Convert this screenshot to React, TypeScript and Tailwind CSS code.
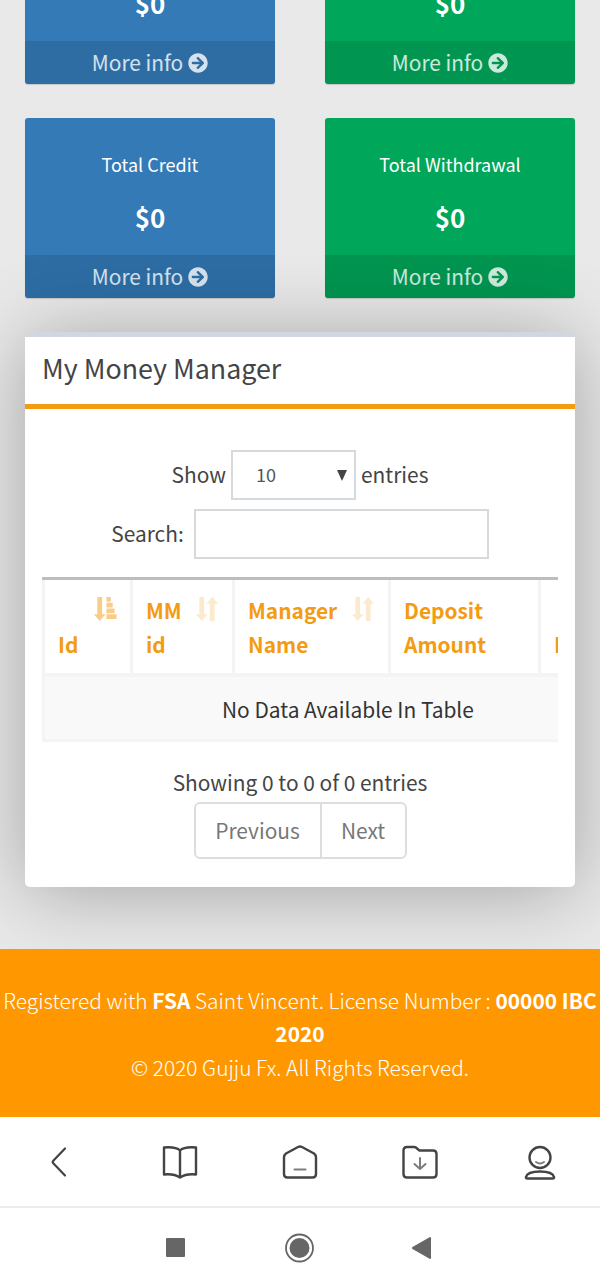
import React from 'react';
import { FaArrowCircleRight } from 'react-icons/fa';

interface StatCardProps {
  title: string;
  value: string;
  color: string;
}

interface Column {
  label: string;
  width: string;
  sort: 'asc' | 'both' | 'none';
}

const stats: StatCardProps[] = [
  { title: 'Total Deposit', value: '$0', color: 'bg-[#337ab7]' },
  { title: 'Total Profit', value: '$0', color: 'bg-[#00a65a]' },
  { title: 'Total Credit', value: '$0', color: 'bg-[#337ab7]' },
  { title: 'Total Withdrawal', value: '$0', color: 'bg-[#00a65a]' },
];

const columns: Column[] = [
  { label: 'Id', width: 'w-[88px]', sort: 'asc' },
  { label: 'MM id', width: 'w-[102px]', sort: 'both' },
  { label: 'Manager Name', width: 'w-[156px]', sort: 'both' },
  { label: 'Deposit Amount', width: 'w-[150px]', sort: 'none' },
  { label: 'Id', width: 'w-[88px]', sort: 'none' },
];

const StatCard: React.FC<StatCardProps> = ({ title, value, color }) => (
  <div className={`flex h-[180px] flex-col rounded-[3px] text-center text-white shadow-[0_1px_1px_rgba(0,0,0,0.15)] ${color}`}>
    <p className="mt-[30px] text-[18px] leading-8">{title}</p>
    <p className="mt-[18px] text-[26px] font-bold leading-[38px]">{value}</p>
    <div className="mt-auto flex h-[43px] items-center justify-center rounded-b-[3px] bg-black/10 text-white/80">
      <span className="mt-px">More info</span>
      <FaArrowCircleRight className="ml-[5px] size-5" />
    </div>
  </div>
);

const SortIcon: React.FC<{ sort: Column['sort'] }> = ({ sort }) => {
  if (sort === 'none') return null;
  return (
    <svg
      className={`absolute right-[13px] top-[17px] h-[25px] w-6 ${sort === 'asc' ? 'opacity-50' : 'opacity-20'}`}
      viewBox="0 0 24 26"
      fill="currentColor"
    >
      <path d="M4 0h5v18h3.500L6.500 25 .5 18H4z" />
      {sort === 'asc' ? (
        <path d="M13.500 0h4.500v5h-4.500zM13.500 6h6.500v5h-6.500zM13.500 12h8.500v5h-8.500zM13.500 18h10.500v5h-10.500z" />
      ) : (
        <path d="M17.500 0l6 7H20v18h-5V7h-3.500z" />
      )}
    </svg>
  );
};

const MoneyManager: React.FC = () => (
  <section className="relative mx-[25px] mt-[34px] h-[555px] rounded-[5px] border-t-[5px] border-[#d2d6de] bg-white shadow-[0_5px_80px_rgba(0,0,0,0.3)]">
    <h3 className="h-[72px] border-b-[5px] border-[#f39c12] pl-[17px] text-[26.800px] leading-[61px]">My Money Manager</h3>
    <div className="mt-[41px] flex items-center justify-center">
      <span>Show</span>
      <div className="mx-[5px] flex h-[50px] w-[125px] items-center justify-between border-2 border-[#d6dadd] pl-[23px] pr-[7px] text-[18px] text-[#555]">
        <span>10</span>
        <svg className="h-[11px] w-[10px]" viewBox="0 0 10 11" fill="#444">
          <path d="M0 0h10L5 11z" />
        </svg>
      </div>
      <span>entries</span>
    </div>
    <label className="mt-[9px] flex items-center justify-center">
      Search:
      <input className="ml-[10px] h-[50px] w-[295px] border-2 border-[#d6dadd]" />
    </label>

    <div className="mx-[17px] mt-[18px] overflow-hidden">
      <div className="w-[587px] border-t-[3px] border-[#bdbdbd]">
        <div className="flex h-[97px] border-b-4 border-r-[3px] border-[#f4f4f4]">
          {columns.map((column, index) => (
            <div
              key={index}
              className={`relative flex shrink-0 items-end border-l-[3px] border-[#f4f4f4] pb-3 pl-[13px] pr-[46px] font-bold text-[#f39c12] ${column.width}`}
            >
              <span className="w-min">{column.label}</span>
              <SortIcon sort={column.sort} />
            </div>
          ))}
        </div>
        <div className="flex h-[65px] items-center border-x-[3px] border-b-[3px] border-[#f4f4f4] bg-[#f9f9f9] pl-[177px] pt-[3px] text-[#333]">
          No Data Available In Table
        </div>
      </div>
    </div>

    <p className="mt-6 text-center">Showing 0 to 0 of 0 entries</p>
    <div className="mx-auto mt-[3px] flex h-[57px] w-[213px] rounded-[6px] border-2 border-[#ddd] text-[#777]">
      <button className="w-[126px] border-r-2 border-[#ddd]">Previous</button>
      <button className="flex-1">Next</button>
    </div>
  </section>
);

const BrowserBar: React.FC = () => (
  <nav className="flex h-[91px] items-center justify-around border-b-2 border-[#ededed] bg-white text-[#444]">
    <svg className="size-10" viewBox="0 0 40 40" fill="none" stroke="currentColor" strokeWidth="2.200" strokeLinecap="round" strokeLinejoin="round">
      <path d="M25 6.500 13.500 18.500Q12 20 13.500 21.500L25 33.500" />
    </svg>
    <svg className="size-10" viewBox="0 0 40 40" fill="none" stroke="currentColor" strokeWidth="2.400" strokeLinejoin="round">
      <path d="M20 8.500Q16 4.500 4 5.500v27Q14 31.500 20 35.500Q26 31.500 36 32.500V5.500Q24 4.500 20 8.500zV35.500" />
    </svg>
    <svg className="size-10" viewBox="0 0 40 40" fill="none" stroke="currentColor" strokeWidth="2.400" strokeLinecap="round" strokeLinejoin="round">
      <path d="M18 5 6 11.500Q4 13 4 15.500V32Q4 35.500 7.500 35.500h25Q36 35.500 36 32V15.500Q36 13 34 11.500L22 5Q20 4 18 5z" />
      <path d="M14.500 27.500h11" strokeWidth="2" opacity="0.7" />
    </svg>
    <svg className="size-10" viewBox="0 0 40 40" fill="none" stroke="currentColor" strokeWidth="2.400" strokeLinecap="round" strokeLinejoin="round">
      <path d="M3.500 8.500Q3.500 5 7 5h7q2 0 3 1.500l2.500 2h13.500Q36.500 8.500 36.500 12V32Q36.500 35.500 33 35.500H7Q3.500 35.500 3.500 32z" />
      <path d="M20 16v11M14.500 22l5.500 5 5.500-5" strokeWidth="2" opacity="0.7" />
    </svg>
    <svg className="size-10" viewBox="0 0 40 40" fill="none" stroke="currentColor" strokeWidth="2.400" strokeLinecap="round" strokeLinejoin="round">
      <circle cx="20" cy="15.500" r="10.500" />
      <path d="M6 35Q7.500 29.500 20 29.500T34 35Q34.500 36.500 32.500 36.500H7.500Q5.500 36.500 6 35z" />
      <path d="M16 20q4 2.800 8 0" strokeWidth="2" opacity="0.7" />
    </svg>
  </nav>
);

const AndroidKeys: React.FC = () => (
  <div className="flex h-[79px] items-center bg-white pl-[166px]">
    <span className="size-[19px] rounded-[1px] bg-[#666]" />
    <svg className="ml-[99px] size-[30px]" viewBox="0 0 30 30">
      <circle cx="15.500" cy="15" r="13.500" fill="none" stroke="#666" strokeWidth="1.800" />
      <circle cx="15.500" cy="15" r="10" fill="#666" />
    </svg>
    <svg className="ml-[98px] h-[22px] w-[19px]" viewBox="0 0 19 22" fill="#666">
      <path d="M18 0Q19 0 19 1V21Q19 22 18 22L.5 12Q-.5 11 .5 10z" />
    </svg>
  </div>
);

const App: React.FC = () => (
  <div className="flex h-[1287px] w-[600px] flex-col overflow-hidden bg-[#e9e9e9] font-['Noto_Sans_CJK_SC',sans-serif] text-[20.900px] leading-[33.300px] text-[#444]">
    <main className="h-[949px] shrink-0 overflow-hidden">
      <div className="-mt-[96px] grid grid-cols-2 gap-x-[50px] gap-y-[34px] px-[25px]">
        {stats.map((stat) => (
          <StatCard key={stat.title} {...stat} />
        ))}
      </div>
      <MoneyManager />
    </main>
    <footer className="h-[168px] shrink-0 bg-[#ff9800] pt-[35px] text-center font-light text-white">
      <p>
        Registered with <b className="font-bold">FSA</b> Saint Vincent. License Number : <b className="font-bold">00000 IBC 2020</b>
      </p>
      <p>© 2020 Gujju Fx. All Rights Reserved.</p>
    </footer>
    <BrowserBar />
    <AndroidKeys />
  </div>
);

export default App;
